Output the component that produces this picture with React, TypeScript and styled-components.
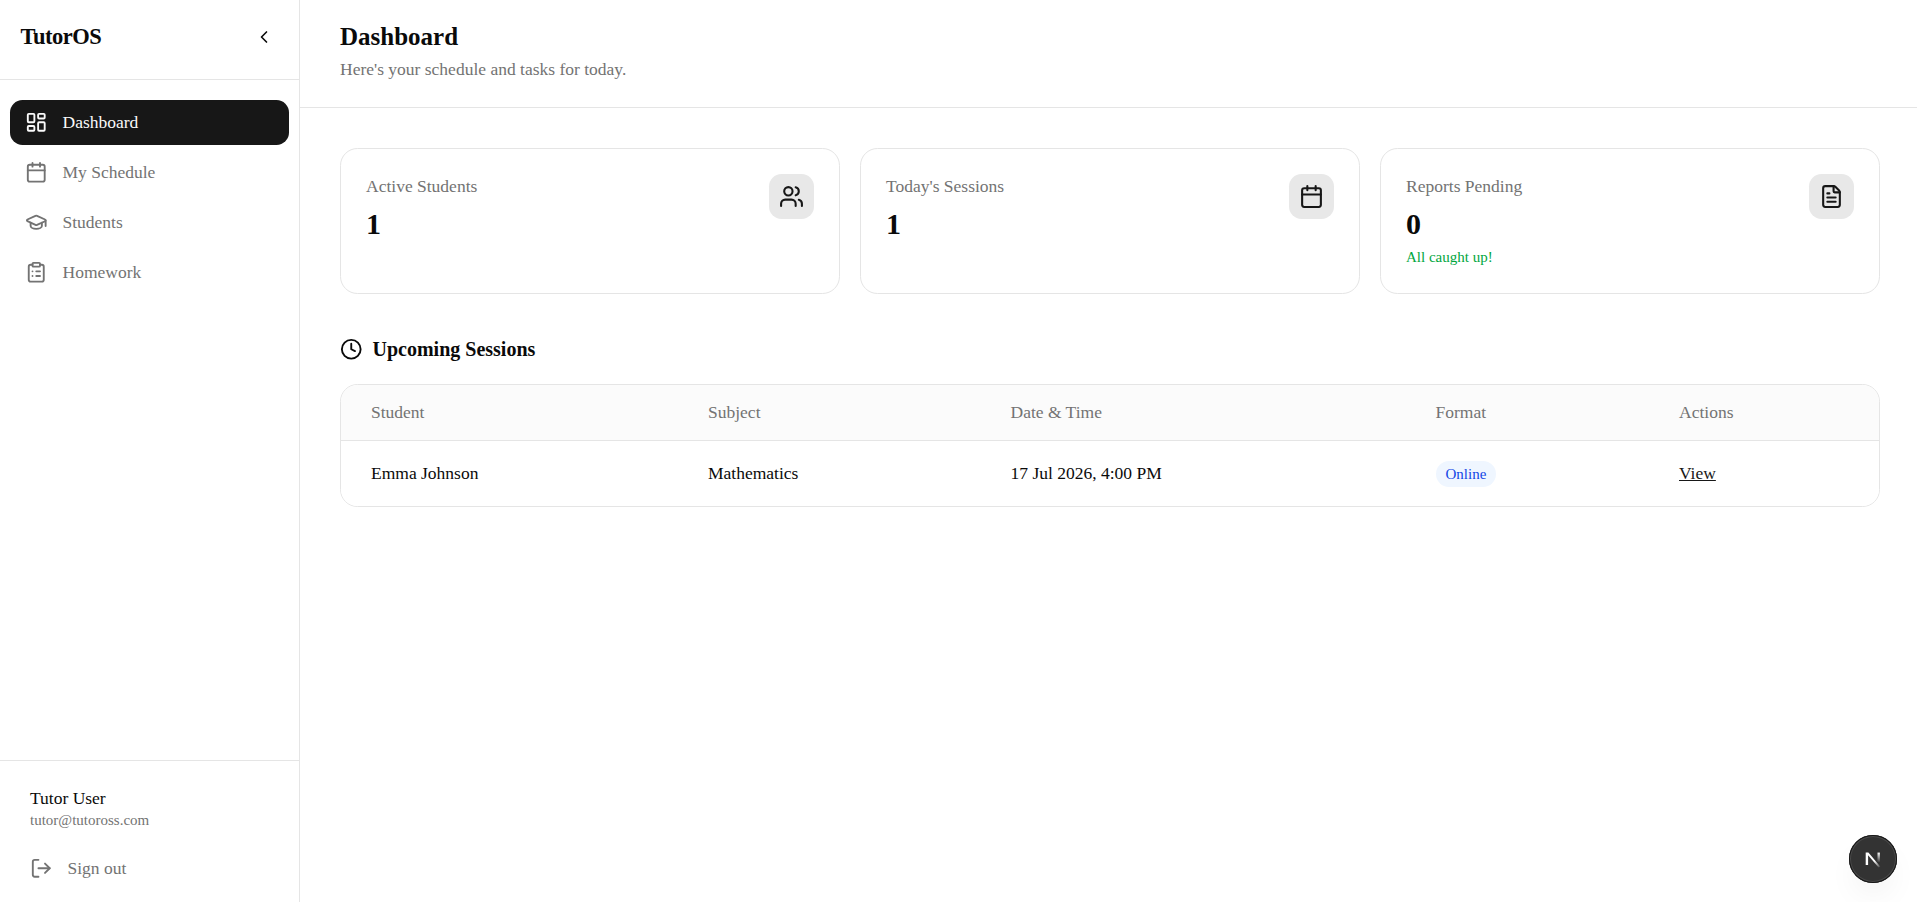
import React from "react";
import styled, { createGlobalStyle } from "styled-components";
import {
  Calendar,
  ChevronLeft,
  ClipboardList,
  Clock,
  FileText,
  GraduationCap,
  LayoutDashboard,
  LogOut,
  Users,
} from "lucide-react";

const GlobalStyle = createGlobalStyle`
  *, *::before, *::after { box-sizing: border-box; }
  body {
    margin: 0;
    background: #fff;
    color: #0a0a0a;
    font-family: "Liberation Serif", "Times New Roman", serif;
    font-size: 17.5px;
    line-height: 25px;
  }
  h1, h2, p { margin: 0; }
  svg { display: block; flex-shrink: 0; }
`;

const Shell = styled.div`
  display: flex;
  height: 100vh;
  overflow: hidden;
`;

const Sidebar = styled.aside`
  width: 300px;
  flex-shrink: 0;
  display: flex;
  flex-direction: column;
  border-right: 1px solid #e5e5e5;
`;

const Brand = styled.div`
  display: flex;
  align-items: flex-start;
  justify-content: space-between;
  height: 80px;
  padding: 19px 20px 0 20.5px;
  border-bottom: 1px solid #e5e5e5;
`;

const Logo = styled.span`
  font-size: 22.5px;
  line-height: 35px;
  font-weight: 700;
  letter-spacing: -0.5px;
`;

const Collapse = styled.button`
  display: flex;
  align-items: center;
  justify-content: center;
  width: 30px;
  height: 36px;
  padding: 0;
  border: 0;
  background: none;
  color: #0a0a0a;
`;

const Nav = styled.nav`
  flex: 1;
  display: flex;
  flex-direction: column;
  gap: 5px;
  padding: 20px 10px;
`;

const NavItem = styled.a<{ $active?: boolean }>`
  display: flex;
  align-items: center;
  gap: 15px;
  height: 45px;
  padding: 0 15px;
  border-radius: 12.5px;
  color: ${(p) => (p.$active ? "#fafafa" : "#737373")};
  background: ${(p) => (p.$active ? "#171717" : "transparent")};
`;

const Account = styled.div`
  height: 142px;
  padding: 25px 30px 0;
  border-top: 1px solid #e5e5e5;
`;

const Email = styled.p`
  font-size: 15px;
  line-height: 18px;
  color: #737373;
`;

const SignOut = styled.a`
  display: flex;
  align-items: center;
  gap: 15px;
  margin-top: 27px;
  color: #737373;
`;

const Main = styled.main`
  flex: 1;
  min-width: 0;
`;

const PageHeader = styled.header`
  height: 108px;
  padding: 19px 40px 0;
  border-bottom: 1px solid #e5e5e5;
`;

const Title = styled.h1`
  font-size: 25px;
  line-height: 35px;
  font-weight: 700;
`;

const Subtitle = styled.p`
  margin-top: 3px;
  color: #737373;
`;

const Content = styled.div`
  padding: 40px 37px 0 40px;
`;

const Cards = styled.div`
  display: grid;
  grid-template-columns: repeat(3, 1fr);
  gap: 20px;
`;

const Card = styled.section`
  display: flex;
  justify-content: space-between;
  align-items: flex-start;
  height: 146px;
  padding: 25px;
  border: 1px solid #e5e5e5;
  border-radius: 17.5px;
`;

const CardLabel = styled.p`
  color: #737373;
`;

const CardValue = styled.p`
  margin-top: 5px;
  font-size: 30px;
  line-height: 40px;
  font-weight: 700;
`;

const CardNote = styled.p`
  margin-top: 3px;
  font-size: 15px;
  line-height: 20px;
  color: #00a63e;
`;

const IconTile = styled.div`
  display: flex;
  align-items: center;
  justify-content: center;
  width: 45px;
  height: 45px;
  border-radius: 12.5px;
  background: #e8e8e8;
  color: #171717;
`;

const SectionTitle = styled.h2`
  display: flex;
  align-items: center;
  gap: 10px;
  margin: 40px 0 20px;
  font-size: 20px;
  line-height: 30px;
  font-weight: 700;

  span {
    padding-top: 1px;
    line-height: 29px;
  }
`;

const TableFrame = styled.div`
  border: 1px solid #e5e5e5;
  border-radius: 17.5px;
  overflow: hidden;
`;

const Row = styled.div<{ $head?: boolean }>`
  display: grid;
  grid-template-columns: 337px 302.5px 425px 243.5px 1fr;
  align-items: center;
  height: ${(p) => (p.$head ? 56 : 65)}px;
  color: ${(p) => (p.$head ? "#737373" : "#0a0a0a")};
  background: ${(p) => (p.$head ? "#fbfbfb" : "#fff")};
  border-bottom: ${(p) => (p.$head ? "1px solid #e5e5e5" : "0")};
`;

const Cell = styled.div`
  display: flex;
  align-items: center;
  padding: 0 30px;
`;

const Badge = styled.span`
  height: 26px;
  margin-top: 1px;
  padding: 0 10px;
  border-radius: 13px;
  background: #eff6ff;
  color: #1447e6;
  font-size: 15px;
  line-height: 26px;
`;

const ViewLink = styled.a`
  color: #171717;
  text-decoration: underline;
`;

const DevButton = styled.button`
  position: fixed;
  right: 20.5px;
  bottom: 19.5px;
  display: flex;
  align-items: center;
  justify-content: center;
  width: 48px;
  height: 48px;
  padding: 0;
  border: 0;
  border-radius: 50%;
  background: #333;
  box-shadow:
    inset 0 0 0 1px #171717,
    inset 0 0 0 2px #4a4a4a,
    0 16px 32px -8px rgba(0, 0, 0, 0.08);
`;

const navItems = [
  { label: "Dashboard", icon: LayoutDashboard, active: true },
  { label: "My Schedule", icon: Calendar },
  { label: "Students", icon: GraduationCap },
  { label: "Homework", icon: ClipboardList },
];

const stats = [
  { label: "Active Students", value: 1, icon: Users },
  { label: "Today's Sessions", value: 1, icon: Calendar },
  { label: "Reports Pending", value: 0, icon: FileText, note: "All caught up!" },
];

const columns = ["Student", "Subject", "Date & Time", "Format", "Actions"];

function NextMark() {
  return (
    <svg width="18" height="18" viewBox="0 0 18 18" fill="none">
      <defs>
        <linearGradient id="diagonal" x1="10.5" y1="11" x2="15.5" y2="17.5" gradientUnits="userSpaceOnUse">
          <stop stopColor="#fff" />
          <stop offset="1" stopColor="#fff" stopOpacity="0.1" />
        </linearGradient>
        <linearGradient id="stem" x1="14.7" y1="2.5" x2="14.7" y2="12.5" gradientUnits="userSpaceOnUse">
          <stop stopColor="#fff" />
          <stop offset="1" stopColor="#fff" stopOpacity="0" />
        </linearGradient>
      </defs>
      <path d="M1.7 2.6H4.4L16.2 16.4L14.6 17.6L4.1 5.3V15H1.7Z" fill="url(#diagonal)" />
      <path d="M13.5 2.6H15.9V13H13.5Z" fill="url(#stem)" />
    </svg>
  );
}

export default function App() {
  return (
    <>
      <GlobalStyle />
      <Shell>
        <Sidebar>
          <Brand>
            <Logo>TutorOS</Logo>
            <Collapse aria-label="Collapse sidebar">
              <ChevronLeft size={20} />
            </Collapse>
          </Brand>
          <Nav>
            {navItems.map(({ label, icon: Icon, active }) => (
              <NavItem key={label} $active={active}>
                <Icon size={22.5} />
                {label}
              </NavItem>
            ))}
          </Nav>
          <Account>
            <p>Tutor User</p>
            <Email>tutor@tutoross.com</Email>
            <SignOut>
              <LogOut size={22.5} />
              Sign out
            </SignOut>
          </Account>
        </Sidebar>
        <Main>
          <PageHeader>
            <Title>Dashboard</Title>
            <Subtitle>Here's your schedule and tasks for today.</Subtitle>
          </PageHeader>
          <Content>
            <Cards>
              {stats.map(({ label, value, icon: Icon, note }) => (
                <Card key={label}>
                  <div>
                    <CardLabel>{label}</CardLabel>
                    <CardValue>{value}</CardValue>
                    {note && <CardNote>{note}</CardNote>}
                  </div>
                  <IconTile>
                    <Icon size={25} />
                  </IconTile>
                </Card>
              ))}
            </Cards>
            <SectionTitle>
              <Clock size={22.5} />
              <span>Upcoming Sessions</span>
            </SectionTitle>
            <TableFrame>
              <Row $head>
                {columns.map((c) => (
                  <Cell key={c}>{c}</Cell>
                ))}
              </Row>
              <Row>
                <Cell>Emma Johnson</Cell>
                <Cell>Mathematics</Cell>
                <Cell>17 Jul 2026, 4:00 PM</Cell>
                <Cell>
                  <Badge>Online</Badge>
                </Cell>
                <Cell>
                  <ViewLink>View</ViewLink>
                </Cell>
              </Row>
            </TableFrame>
          </Content>
        </Main>
      </Shell>
      <DevButton aria-label="Open developer tools">
        <NextMark />
      </DevButton>
    </>
  );
}
